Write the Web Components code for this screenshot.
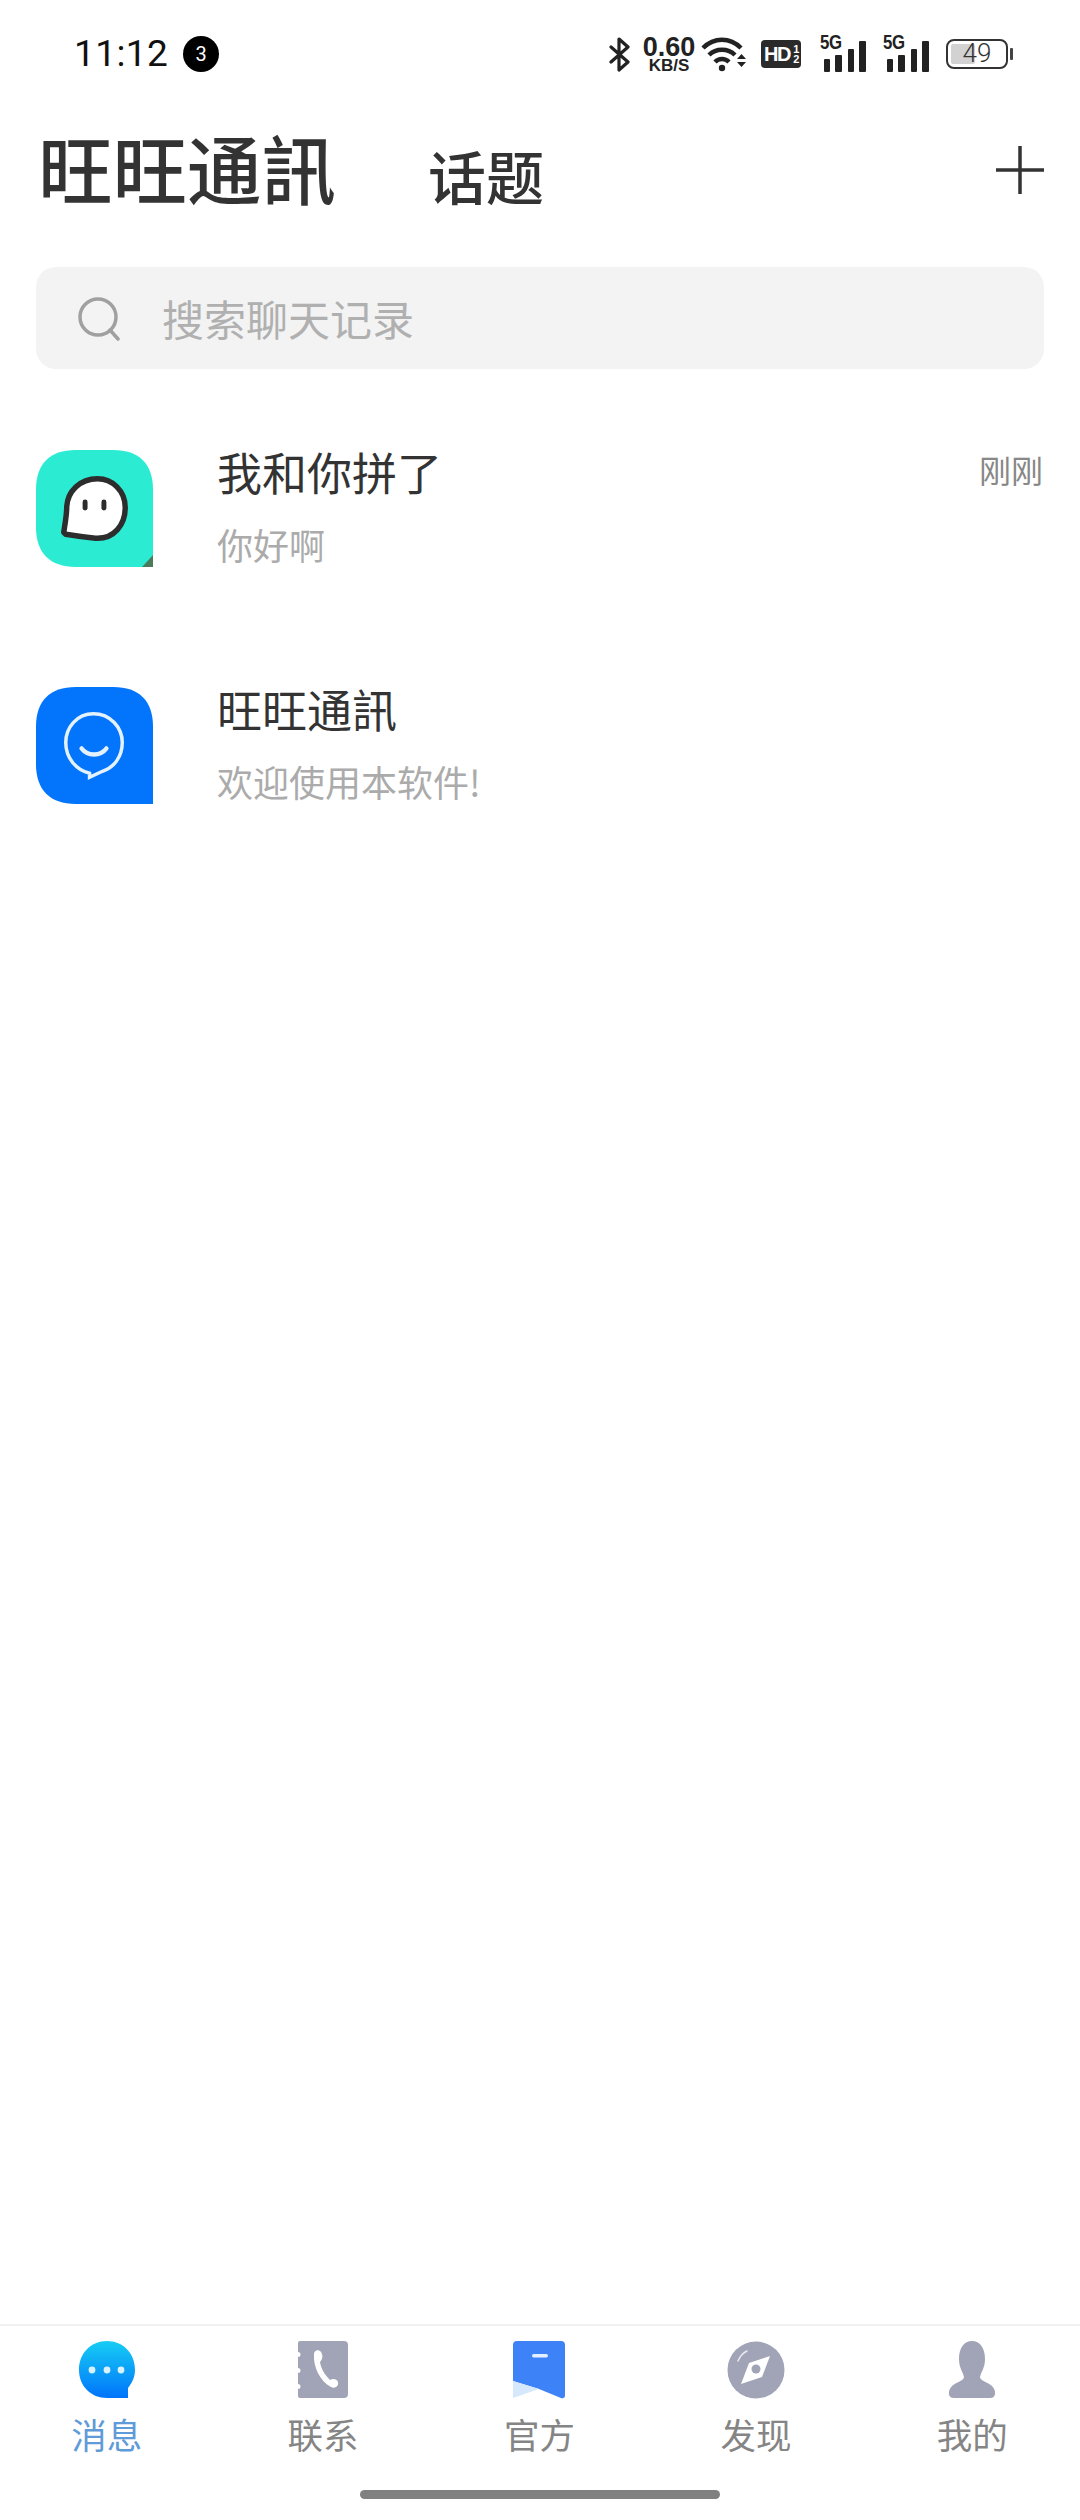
<!DOCTYPE html>
<html lang="zh">
<head>
<meta charset="utf-8">
<title>旺旺通訊</title>
<style>
    html, body { margin: 0; background: #fff; }
    body { width: 1080px; height: 2520px; font-family: "Noto Sans CJK SC", "Noto Sans", sans-serif; color: #333; }
    #app { display: flex; flex-direction: column; height: 2520px; }
    svg { display: block; }
</style>
</head>
<body>
<div id="app">
    <status-bar time="11:12" badge="3" speed="0.60" battery="49"></status-bar>
    <app-header></app-header>
    <search-box placeholder="搜索聊天记录"></search-box>
    <chat-list>
        <chat-row name="我和你拼了" text="你好啊" when="刚刚">
            <svg slot="avatar" width="117" height="117" viewBox="0 0 118 118">
                <path d="M40 0H78C104 0 118 14 118 40V118H40C14 118 0 104 0 78V40C0 14 14 0 40 0Z" fill="#2bebd3"/>
                <path d="M107 118L118 106V118Z" fill="#4a7c5c"/>
                <path d="M30 85C36 86 50 88 60 89C79 90 90 75 90 58C90 41 77 29 62 29C44 29 32 42 31 57C31 66 29 76 28 83Z" fill="#fff" stroke="#2d2d2d" stroke-width="5.5" stroke-linejoin="round"/>
                <rect x="47" y="50" width="5" height="11" rx="2.5" fill="#2d2d2d"/>
                <rect x="66" y="50" width="5" height="11" rx="2.5" fill="#2d2d2d"/>
            </svg>
        </chat-row>
        <chat-row name="旺旺通訊" text="欢迎使用本软件!">
            <svg slot="avatar" width="117" height="117" viewBox="0 0 118 118">
                <path d="M40 0H78C104 0 118 14 118 40V118H40C14 118 0 104 0 78V40C0 14 14 0 40 0Z" fill="#0275fc"/>
                <path d="M58 27C41 27 30 41 30 56C30 72 41 84 54 87L54 91L67 85C79 81 87 70 87 56C87 41 75 27 58 27Z" fill="none" stroke="#e4f2ff" stroke-width="3.5"/>
                <path d="M46 62C52 70 65 70 71 62" fill="none" stroke="#e4f2ff" stroke-width="4.500" stroke-linecap="round"/>
            </svg>
        </chat-row>
    </chat-list>
    <tab-bar>
        <tab-item label="消息" active>
            <svg width="60" height="60" viewBox="0 0 60 60">
                <defs><linearGradient id="msgBlue" x1="0" y1="0" x2="0" y2="1"><stop offset="0" stop-color="#17cdf4"/><stop offset="1" stop-color="#0074fb"/></linearGradient></defs>
                <path d="M30 1C46 1 58 13 58 30C58 37 55 43 51 48L51 58H30C14 58 2 46 2 30C2 13 14 1 30 1Z" fill="url(#msgBlue)"/>
                <circle cx="15" cy="30" r="3.4" fill="#d8f3ff"/><circle cx="30" cy="30" r="3.4" fill="#d8f3ff"/><circle cx="44" cy="30" r="3.4" fill="#d8f3ff"/>
            </svg>
        </tab-item>
        <tab-item label="联系">
            <svg width="60" height="60" viewBox="0 0 60 60">
                <path d="M7 1H51Q55 1 55 5V54Q55 58 51 58H7Q5 58 5 56V49A2.500 2.500 0 0 0 5 44V33A2.500 2.500 0 0 0 5 28V17A2.500 2.500 0 0 0 5 12V3Q5 1 7 1Z" fill="#a0a4b6"/>
                <path d="M21 14C21 10 26 9 28 12C30 15 30 19 27 22C28 29 32 35 37 40C40 38 44 39 45 42C46 46 42 49 38 47C27 41 20 27 21 14Z" fill="#fff"/>
            </svg>
        </tab-item>
        <tab-item label="官方">
            <svg width="60" height="60" viewBox="0 0 60 60">
                <path d="M4 5Q4 1 8 1H52Q56 1 56 5V55Q56 59 52 58L30 49L4 41V5Z" fill="#3e82f7"/>
                <path d="M4 41L30 49L4 58Z" fill="#d6e8fb"/>
                <rect x="23" y="14" width="16" height="3.500" rx="1.700" fill="#e4f0ff"/>
            </svg>
        </tab-item>
        <tab-item label="发现">
            <svg width="60" height="60" viewBox="0 0 60 60">
                <circle cx="30" cy="30" r="28.500" fill="#a0a4b6"/>
                <path d="M12 21C14 16 17 13 21 11" fill="none" stroke="#e8eaf0" stroke-width="1.500" stroke-linecap="round"/>
                <path d="M44 16L36 37L15 44L23 23Z" fill="#fff"/>
                <circle cx="30" cy="29" r="4.500" fill="#a0a4b6"/>
            </svg>
        </tab-item>
        <tab-item label="我的">
            <svg width="60" height="60" viewBox="0 0 60 60">
                <path d="M30 1C38 1 43 8 43 19C43 28 39 32 38 37C38 41 46 42 50 46C54 50 55 58 48 58H12C5 58 6 50 10 46C14 42 22 41 22 37C21 32 17 28 17 19C17 8 22 1 30 1Z" fill="#a0a4b6"/>
            </svg>
        </tab-item>
    </tab-bar>
</div>

<script>
class StatusBar extends HTMLElement {
    constructor() {
        super();
        this.attachShadow({mode: "open"});
        const signal = `
            <div class="signal">
                <span class="net">5G</span>
                <svg width="46" height="32" viewBox="0 0 46 32">
                    <rect x="4" y="19" width="6" height="13" rx="1" fill="#222"/>
                    <rect x="15" y="15" width="7" height="17" rx="1" fill="#222"/>
                    <rect x="28" y="9" width="6" height="23" rx="1" fill="#222"/>
                    <rect x="39" y="1" width="7" height="31" rx="1" fill="#222"/>
                </svg>
            </div>`;
        this.shadowRoot.innerHTML = `
            <style>
                :host { display: flex; align-items: center; height: 108px; padding: 0 67px 0 74px; box-sizing: border-box; color: #111; font-family: Roboto, sans-serif; flex: none; }
                svg { display: block; }
                .time { font-size: 37px; letter-spacing: 0.4px; line-height: 40px; }
                .badge { width: 36px; height: 36px; margin-left: 15px; border-radius: 50%; background: #000; color: #fff; font-size: 20px; display: flex; align-items: center; justify-content: center; }
                .right { margin-left: auto; display: flex; align-items: center; }
                .speed { margin-left: 12px; width: 52px; display: flex; flex-direction: column; align-items: center; font-family: "Liberation Sans", sans-serif; font-weight: 700; color: #222; }
                .speed b { font-size: 27px; line-height: 22px; }
                .speed small { font-size: 17px; line-height: 15px; font-weight: 700; }
                .wifi { margin-left: 6px; }
                .hd { margin-left: 14px; width: 40px; height: 28px; border-radius: 4px; background: #2a2a2a; color: #fff; font: 700 20px/28px "Liberation Sans", sans-serif; letter-spacing: -1.5px; padding-left: 3px; box-sizing: border-box; display: flex; align-items: center; }
                .hd span { font-size: 11px; line-height: 10px; width: 8px; margin-left: 2.500px; letter-spacing: 0; text-align: center; }
                .signal { margin-left: 19px; width: 46px; height: 36px; position: relative; display: flex; align-items: flex-end; }
                .signal + .signal { margin-left: 17px; }
                .net { position: absolute; left: 0; top: -4px; font: 700 21px/20px "Liberation Sans", sans-serif; color: #222; letter-spacing: -0.5px; transform: scaleX(.8); transform-origin: left; }
                .battery { margin-left: 17px; width: 62px; height: 30px; border: 2.500px solid #333; border-radius: 8px; box-sizing: border-box; padding: 3px; position: relative; }
                .fill { width: 46%; height: 100%; background: #d2d2d2; border-radius: 2px; }
                .level { position: absolute; inset: 0; text-align: center; font: 26px/25px Roboto, sans-serif; color: #333; font-weight: 300; }
                .nib { margin-left: 2px; width: 3px; height: 12px; background: #444; border-radius: 1px; }
            </style>
            <span class="time">${this.getAttribute('time')}</span>
            <span class="badge">${this.getAttribute('badge')}</span>
            <div class="right">
                <svg width="22" height="35" viewBox="0 0 22 35"><path d="M2 10L19 25L10 33V2L19 10L2 25" fill="none" stroke="#222" stroke-width="3.200" stroke-linejoin="round" stroke-linecap="round"/></svg>
                <div class="speed"><b>${this.getAttribute('speed')}</b><small>KB/S</small></div>
                <svg class="wifi" width="46" height="35" viewBox="0 0 46 35">
                    <path d="M2 11C13 0 29 0 40 11" fill="none" stroke="#222" stroke-width="4.500"/>
                    <path d="M8 18C15 11 27 11 34 18" fill="none" stroke="#222" stroke-width="4.500"/>
                    <path d="M14 25C18 21 24 21 28 25" fill="none" stroke="#222" stroke-width="4.500"/>
                    <circle cx="21" cy="31" r="3.200" fill="#222"/>
                    <path d="M36 22H45L40.500 17ZM36 25H45L40.500 30Z" fill="#222"/>
                </svg>
                <div class="hd">HD<span>1<br>2</span></div>
                ${signal}
                ${signal}
                <div class="battery"><div class="fill"></div><div class="level">${this.getAttribute('battery')}</div></div>
                <div class="nib"></div>
            </div>`;
    }
}

const headerTemplate = document.createElement('template');
headerTemplate.innerHTML = `
    <style>
        :host { display: flex; align-items: flex-end; height: 106px; padding: 0 35px 0 38px; flex: none; color: #333; font-family: "Noto Sans CJK SC", sans-serif; }
        h1 { margin: 0; font-size: 74.500px; line-height: 106px; font-weight: 500; position: relative; top: 6px; }
        h2 { margin: 0 0 0 92px; font-size: 58px; line-height: 100px; font-weight: 500; position: relative; top: 11px; }
        svg { display: block; margin-left: auto; align-self: flex-start; margin-top: 37px; }
    </style>
    <h1>旺旺通訊</h1>
    <h2>话题</h2>
    <svg width="50" height="50" viewBox="0 0 50 50"><path d="M25 1V49M1 25H49" stroke="#333" stroke-width="3.500"/></svg>
`;

class AppHeader extends HTMLElement {
    constructor() {
        super();
        this.attachShadow({mode: "open"});
        this.shadowRoot.appendChild(headerTemplate.content.cloneNode(true));
    }
}

class SearchBox extends HTMLElement {
    constructor() {
        super();
        this.attachShadow({mode: "open"});
        this.shadowRoot.innerHTML = `
            <style>
                :host { display: flex; align-items: center; flex: none; height: 102px; margin: 53px 36px 0 36px; padding-left: 41px; background: #f3f3f3; border-radius: 20px; color: #b0b0b0; font: 42px/60px "Noto Sans CJK SC", sans-serif; }
                svg { display: block; margin-right: 40px; }
            </style>
            <svg width="45" height="45" viewBox="0 0 45 45">
                <circle cx="21" cy="21" r="18" fill="none" stroke="#a0a0a0" stroke-width="3.500"/>
                <path d="M33 34L41 43" stroke="#a0a0a0" stroke-width="3.500" stroke-linecap="round"/>
            </svg>
            <span>${this.getAttribute('placeholder')}</span>`;
    }
}

class ChatList extends HTMLElement {
    constructor() {
        super();
        this.attachShadow({mode: "open"});
        this.shadowRoot.innerHTML = `
            <style>
                :host { display: flex; flex-direction: column; gap: 120px; flex: 1; padding: 81px 36px 0 36px; }
            </style>
            <slot></slot>`;
    }
}

class ChatRow extends HTMLElement {
    constructor() {
        super();
        this.attachShadow({mode: "open"});
        const when = this.getAttribute('when') || '';
        this.shadowRoot.innerHTML = `
            <style>
                :host { display: flex; height: 117px; font-family: "Noto Sans CJK SC", sans-serif; }
                .avatar { width: 117px; height: 117px; flex: none; }
                .body { margin-left: 64px; flex: 1; display: flex; flex-direction: column; }
                .top { display: flex; justify-content: space-between; }
                .name { font-size: 45px; line-height: 64px; color: #333; margin-top: -10px; }
                .when { font-size: 32px; line-height: 48px; color: #888; margin: -5px 1px 0 0; }
                .text { font-size: 36px; line-height: 50px; color: #ababab; margin-top: 15px; }
            </style>
            <div class="avatar"><slot name="avatar"></slot></div>
            <div class="body">
                <div class="top"><span class="name">${this.getAttribute('name')}</span><span class="when">${when}</span></div>
                <div class="text">${this.getAttribute('text')}</div>
            </div>`;
    }
}

class TabBar extends HTMLElement {
    constructor() {
        super();
        this.attachShadow({mode: "open"});
        this.shadowRoot.innerHTML = `
            <style>
                :host { display: block; flex: none; height: 196px; border-top: 2px solid #f1f1f1; box-sizing: border-box; }
                .tabs { display: grid; grid-template-columns: repeat(5, 1fr); padding: 14px 0 0 0; height: 150px; box-sizing: border-box; margin: 0 -1px; }
                .home { width: 360px; height: 9px; margin: 14px auto 0; border-radius: 5px; background: #808080; }
            </style>
            <div class="tabs"><slot></slot></div>
            <div class="home"></div>`;
    }
}

class TabItem extends HTMLElement {
    constructor() {
        super();
        this.attachShadow({mode: "open"});
        this.shadowRoot.innerHTML = `
            <style>
                :host { display: flex; flex-direction: column; align-items: center; font-family: "Noto Sans CJK SC", sans-serif; color: #858585; }
                :host([active]) { color: #5f9bd8; }
                .icon { width: 60px; height: 60px; margin-left: -1px; }
                .label { font-size: 35.500px; line-height: 50px; margin-top: 9px; margin-left: -1px; }
            </style>
            <div class="icon"><slot></slot></div>
            <div class="label">${this.getAttribute('label')}</div>`;
    }
}

customElements.define('status-bar', StatusBar);
customElements.define('app-header', AppHeader);
customElements.define('search-box', SearchBox);
customElements.define('chat-list', ChatList);
customElements.define('chat-row', ChatRow);
customElements.define('tab-bar', TabBar);
customElements.define('tab-item', TabItem);
</script>
</body>
</html>
